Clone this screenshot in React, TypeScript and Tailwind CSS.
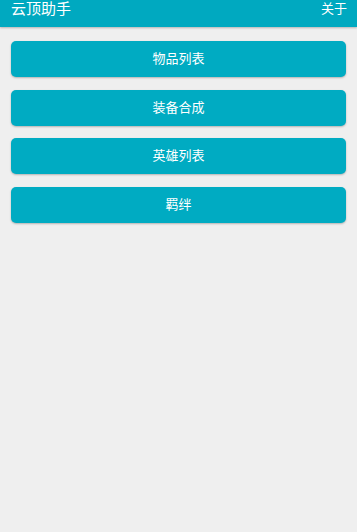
const items = ['物品列表', '装备合成', '英雄列表', '羁绊'];

export default function App() {
  return (
    <div
      className="min-h-[532px] bg-[#efefef] flex flex-col"
      style={{ fontFamily: "Roboto, 'Noto Sans CJK SC', sans-serif" }}
    >
      <header className="h-[27px] bg-[#00a9c0] flex items-start justify-between pl-[11px] pr-[10px] shadow-[0_1px_2px_rgba(0,0,0,0.25)]">
        <span className="text-white text-[15px] leading-[18px]">云顶助手</span>
        <span className="text-white text-[13px] leading-[18px]">关于</span>
      </header>
      <div className="flex flex-col gap-[12.5px] px-[11px] pt-[14px]">
        {items.map((label) => (
          <button
            key={label}
            className="h-[36px] rounded-[5px] bg-[#00abc2] text-white text-[13px] shadow-[0_1px_2px_rgba(0,0,0,0.25)]"
          >
            {label}
          </button>
        ))}
      </div>
    </div>
  );
}
